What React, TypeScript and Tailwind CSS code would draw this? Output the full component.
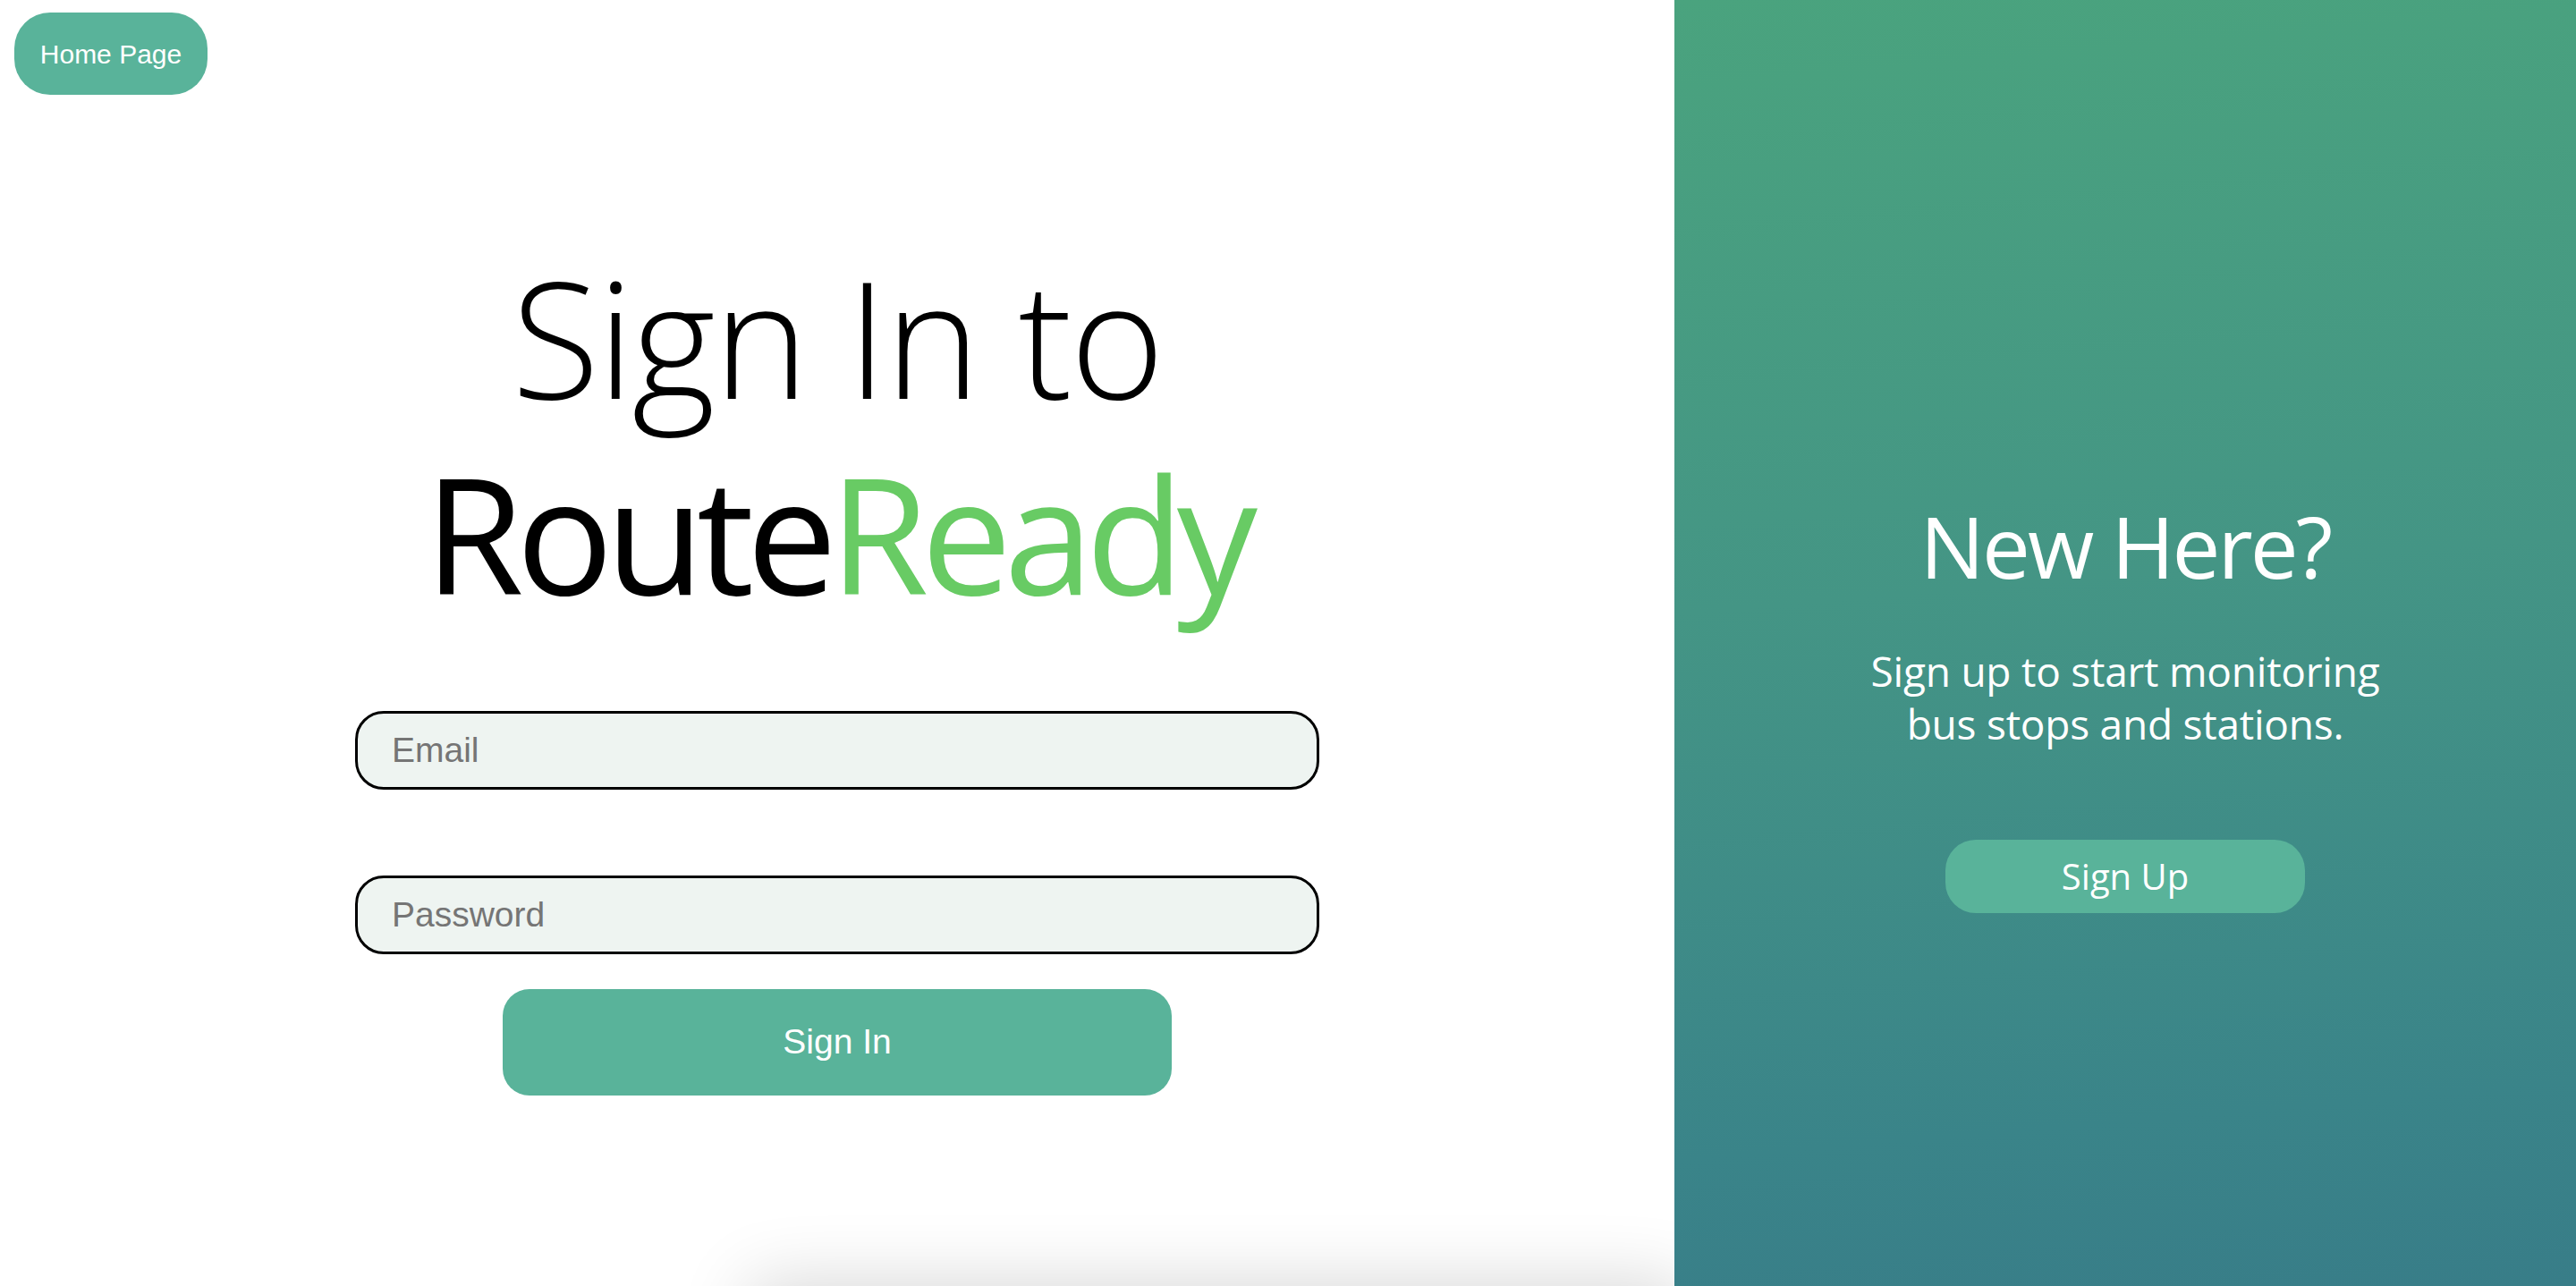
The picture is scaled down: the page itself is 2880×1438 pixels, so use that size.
import React from "react";

const heading = { fontFamily: '"Open Sans", "Noto Sans", sans-serif' };
const arial = { fontFamily: '"Liberation Sans", Arial, sans-serif' };

const SignInForm = () => {
  return (
    <div className="flex flex-col items-center">
      <input
        type="email"
        placeholder="Email"
        style={arial}
        className="w-[1078px] h-[88px] border-[3px] border-black rounded-[32px] bg-[#eef4f1] pl-[38px] text-[39px] text-black placeholder:text-[#757575] outline-none"
      />
      <input
        type="password"
        placeholder="Password"
        style={arial}
        className="mt-[96px] w-[1078px] h-[88px] border-[3px] border-black rounded-[32px] bg-[#eef4f1] pl-[38px] text-[39px] text-black placeholder:text-[#757575] outline-none"
      />
      <button
        style={arial}
        className="mt-[39px] w-[748px] h-[119px] rounded-[30px] bg-[#59b39a] text-white text-[39px]"
      >
        Sign In
      </button>
    </div>
  );
};

const App = () => {
  return (
    <div className="flex w-full h-[1438px] overflow-hidden bg-white">
      <div className="relative flex-1 flex flex-col overflow-hidden">
        <button
          style={arial}
          className="self-start ml-4 mt-[14px] w-[216px] h-[92px] rounded-[40px] bg-[#59b39a] text-white text-[30px]"
        >
          Home Page
        </button>

        <h1
          style={heading}
          className="mt-[161px] text-center text-[180px] leading-[219px]"
        >
          <span className="block font-light tracking-[-0.012em] text-black">
            Sign In to
          </span>
          <span className="block font-normal tracking-[-0.047em]">
            <span className="text-black">Route</span>
            <span className="text-[#68cb64]">Ready</span>
          </span>
        </h1>

        <div className="mt-[90px]">
          <SignInForm />
        </div>

        <div className="absolute left-[850px] right-0 top-[1446px] h-[120px] shadow-[0_0_80px_12px_rgba(0,0,0,0.16)]" />
      </div>

      <div
        style={heading}
        className="w-[1008px] flex flex-col items-center bg-[linear-gradient(175deg,#4aa37e_0%,#449585_45%,#3a8489_85%,#387d88_100%)] text-white"
      >
        <h2 className="mt-[552px] text-[96px] leading-[116px] font-normal tracking-[-0.03em]">
          New Here?
        </h2>
        <p className="mt-[53px] text-center text-[46px] leading-[59px] font-normal tracking-[-0.005em]">
          Sign up to start monitoring
          <br />
          bus stops and stations.
        </p>
        <button className="mt-[100px] w-[402px] h-[82px] rounded-[34px] bg-[#59b39a] text-white text-[40px] font-medium">
          Sign Up
        </button>
      </div>
    </div>
  );
};

export default App;
